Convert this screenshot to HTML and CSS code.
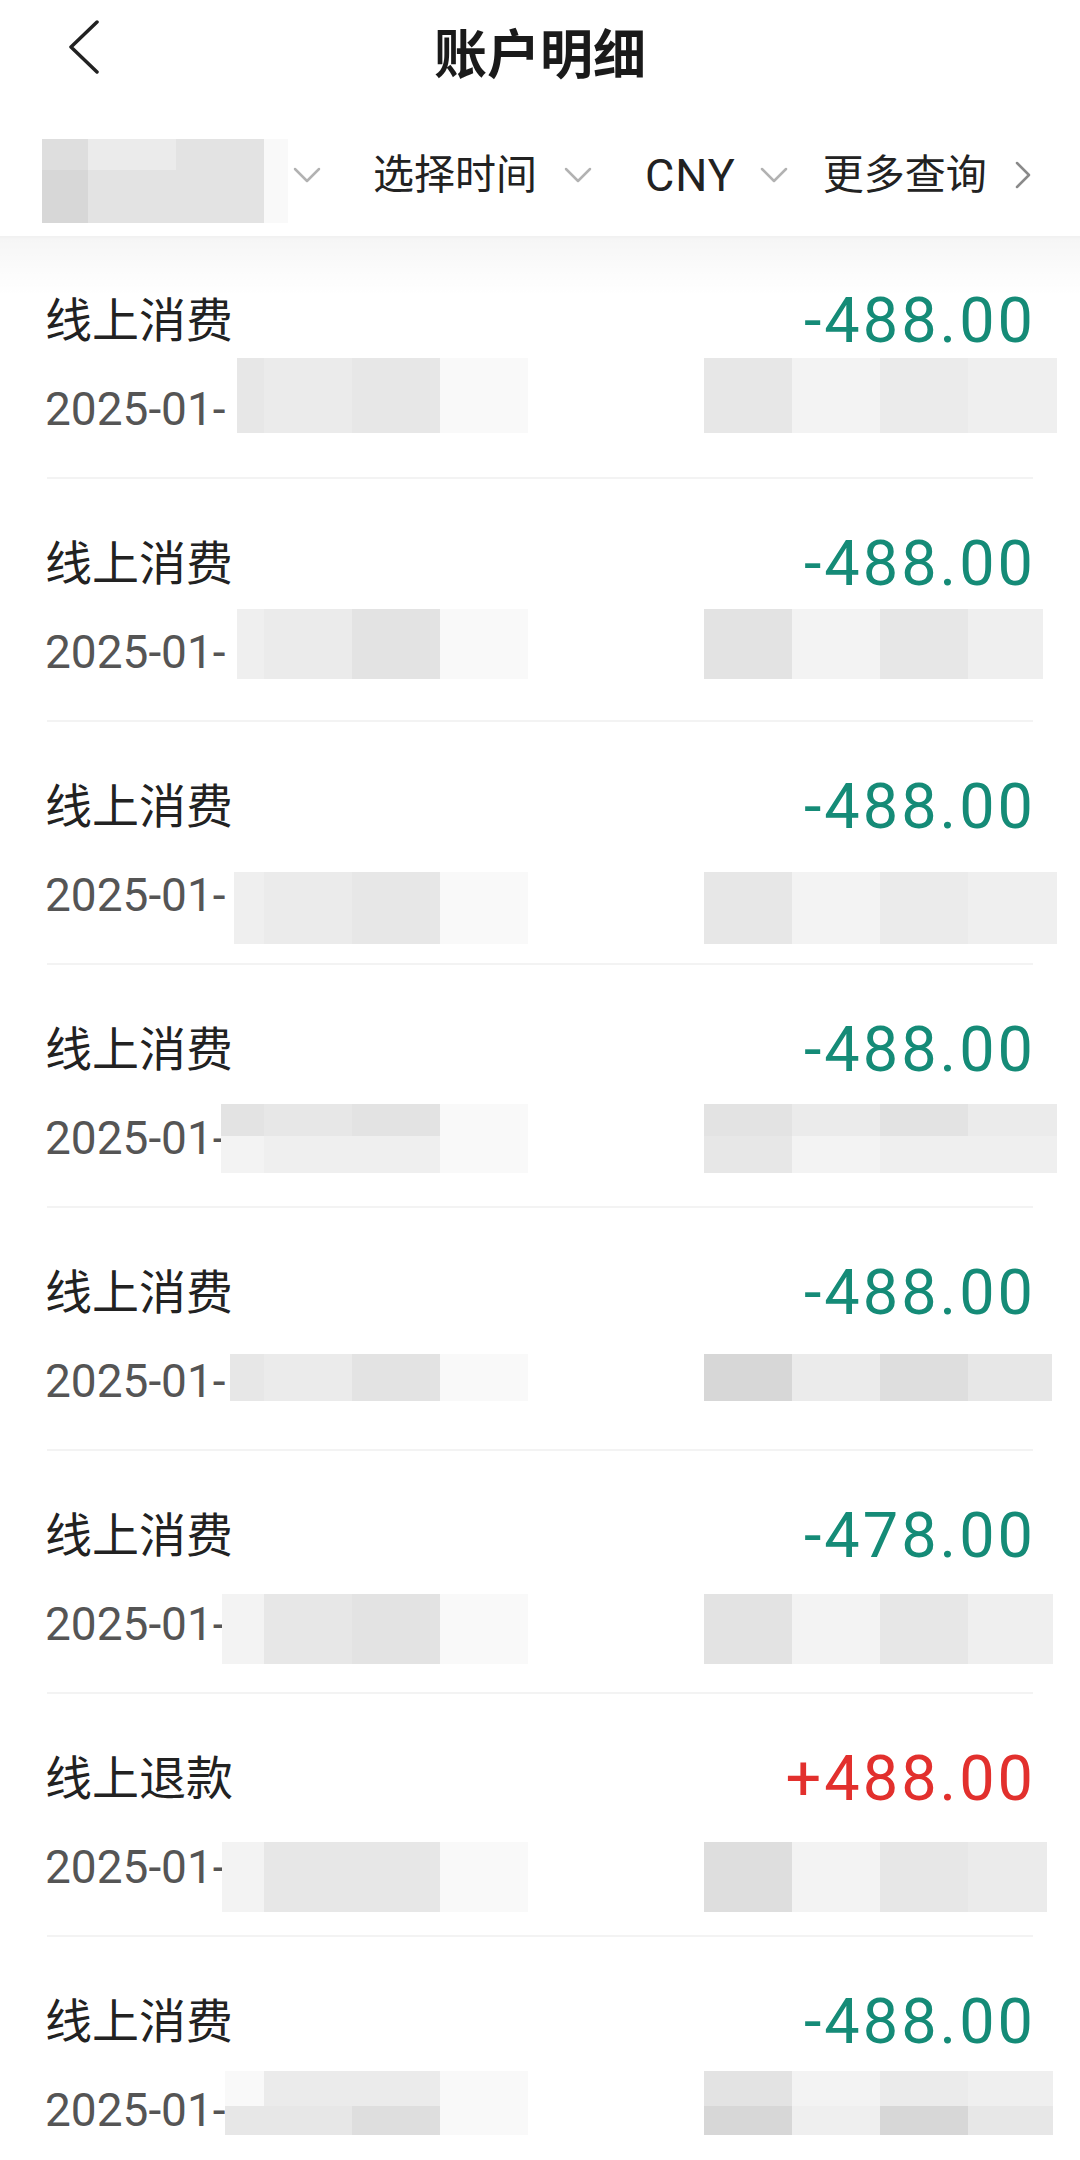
FILE: index.html
```html
<!DOCTYPE html>
<html>
<head>
    <meta charset="utf-8">
    <title>账户明细</title>
    <link rel="stylesheet" href="styles.css">
</head>
<body>
    <div class="header">
        <div class="nav">
            <svg class="back" width="30" height="54" viewBox="0 0 30 54">
                <polyline points="28,2 2,27 28,52" fill="none" stroke="#222" stroke-width="3.5" stroke-linecap="round" stroke-linejoin="round"/>
            </svg>
            <div class="nav-title">账户明细</div>
        </div>

        <div class="filters">
            <div class="filter-item account">
                <div class="acct-mask">
                    <i class="k2"></i><i class="k5"></i><i class="k3"></i><i class="k8"></i>
                    <i class="k1"></i><i class="k3"></i><i class="k3"></i><i class="k8"></i>
                </div>
                <svg class="down" width="28" height="16" viewBox="0 0 28 16">
                    <polyline points="2,2 14,14 26,2" fill="none" stroke="#b2b2b2" stroke-width="2.5" stroke-linecap="round" stroke-linejoin="round"/>
                </svg>
            </div>
            <div class="filter-item time">
                <span>选择时间</span>
                <svg class="down" width="28" height="16" viewBox="0 0 28 16">
                    <polyline points="2,2 14,14 26,2" fill="none" stroke="#b2b2b2" stroke-width="2.5" stroke-linecap="round" stroke-linejoin="round"/>
                </svg>
            </div>
            <div class="filter-item currency">
                <span>CNY</span>
                <svg class="down" width="28" height="16" viewBox="0 0 28 16">
                    <polyline points="2,2 14,14 26,2" fill="none" stroke="#b2b2b2" stroke-width="2.5" stroke-linecap="round" stroke-linejoin="round"/>
                </svg>
            </div>
            <div class="filter-item more">
                <span>更多查询</span>
                <svg width="16" height="28" viewBox="0 0 16 28">
                    <polyline points="2,2 14,14 2,26" fill="none" stroke="#8a8a8a" stroke-width="2.5" stroke-linecap="round" stroke-linejoin="round"/>
                </svg>
            </div>
        </div>
    </div>

    <div class="list">
        <div class="row r1">
            <div class="row-top">
                <span class="row-title">线上消费</span>
                <span class="amount out">-488.00</span>
            </div>
            <div class="row-date">2025-01-</div>
            <div class="mask mask-l"><i class="k4"></i><i class="k5"></i><i class="k4"></i><i class="k8"></i></div>
            <div class="mask mask-r"><i class="k4"></i><i class="k7"></i><i class="k5"></i><i class="k6"></i></div>
        </div>

        <div class="row r2">
            <div class="row-top">
                <span class="row-title">线上消费</span>
                <span class="amount out">-488.00</span>
            </div>
            <div class="row-date">2025-01-</div>
            <div class="mask mask-l"><i class="k6"></i><i class="k5"></i><i class="k3"></i><i class="k8"></i></div>
            <div class="mask mask-r"><i class="k3"></i><i class="k7"></i><i class="k4"></i><i class="k6"></i></div>
        </div>

        <div class="row r3">
            <div class="row-top">
                <span class="row-title">线上消费</span>
                <span class="amount out">-488.00</span>
            </div>
            <div class="row-date">2025-01-</div>
            <div class="mask mask-l"><i class="k6"></i><i class="k5"></i><i class="k4"></i><i class="k8"></i></div>
            <div class="mask mask-r"><i class="k4"></i><i class="k7"></i><i class="k5"></i><i class="k6"></i></div>
        </div>

        <div class="row r4">
            <div class="row-top">
                <span class="row-title">线上消费</span>
                <span class="amount out">-488.00</span>
            </div>
            <div class="row-date">2025-01-</div>
            <div class="mask mask-l">
                <i class="k3"></i><i class="k4"></i><i class="k3"></i><i class="k8"></i>
                <i class="k7"></i><i class="k6"></i><i class="k6"></i><i class="k8"></i>
            </div>
            <div class="mask mask-r">
                <i class="k3"></i><i class="k5"></i><i class="k3"></i><i class="k5"></i>
                <i class="k4"></i><i class="k7"></i><i class="k6"></i><i class="k6"></i>
            </div>
        </div>

        <div class="row r5">
            <div class="row-top">
                <span class="row-title">线上消费</span>
                <span class="amount out">-488.00</span>
            </div>
            <div class="row-date">2025-01-</div>
            <div class="mask mask-l"><i class="k4"></i><i class="k5"></i><i class="k3"></i><i class="k8"></i></div>
            <div class="mask mask-r"><i class="k1"></i><i class="k5"></i><i class="k2"></i><i class="k4"></i></div>
        </div>

        <div class="row r6">
            <div class="row-top">
                <span class="row-title">线上消费</span>
                <span class="amount out">-478.00</span>
            </div>
            <div class="row-date">2025-01-</div>
            <div class="mask mask-l"><i class="k7"></i><i class="k4"></i><i class="k3"></i><i class="k8"></i></div>
            <div class="mask mask-r"><i class="k3"></i><i class="k7"></i><i class="k4"></i><i class="k6"></i></div>
        </div>

        <div class="row r7">
            <div class="row-top">
                <span class="row-title">线上退款</span>
                <span class="amount in">+488.00</span>
            </div>
            <div class="row-date">2025-01-</div>
            <div class="mask mask-l"><i class="k7"></i><i class="k4"></i><i class="k4"></i><i class="k8"></i></div>
            <div class="mask mask-r"><i class="k2"></i><i class="k7"></i><i class="k4"></i><i class="k5"></i></div>
        </div>

        <div class="row r8">
            <div class="row-top">
                <span class="row-title">线上消费</span>
                <span class="amount out">-488.00</span>
            </div>
            <div class="row-date">2025-01-</div>
            <div class="mask mask-l">
                <i class="k8"></i><i class="k5"></i><i class="k5"></i><i class="k8"></i>
                <i class="k4"></i><i class="k4"></i><i class="k2"></i><i class="k8"></i>
            </div>
            <div class="mask mask-r">
                <i class="k3"></i><i class="k7"></i><i class="k5"></i><i class="k6"></i>
                <i class="k1"></i><i class="k6"></i><i class="k1"></i><i class="k4"></i>
            </div>
        </div>
    </div>
</body>
</html>
```

FILE: styles.css
```css
body {
    margin: 0;
    background-color: #fff;
    font-family: Roboto, "Noto Sans CJK SC", sans-serif;
    color: #222;
    overflow: hidden;
}

/* top bar */
.header {
    position: relative;
    z-index: 2;
    background-color: #fff;
}
.header::after {
    content: "";
    position: absolute;
    left: 0;
    right: 0;
    top: 100%;
    height: 60px;
    background: linear-gradient(rgba(0, 0, 0, 0.06), rgba(0, 0, 0, 0.035) 4px, rgba(0, 0, 0, 0));
    pointer-events: none;
}
.nav {
    position: relative;
    display: flex;
    justify-content: center;
    align-items: center;
    height: 102px;
}
.back {
    position: absolute;
    left: 69px;
    top: 20px;
}
.nav-title {
    font-family: "Noto Sans CJK SC", sans-serif;
    font-size: 53px;
    font-weight: 700;
    line-height: 1;
    color: #1a1a1a;
}

.filters {
    display: flex;
    align-items: center;
    box-sizing: border-box;
    height: 134px;
    padding: 12px 0 0 42px;
    font-size: 41px;
    line-height: 1;
    color: #222;
}
.filter-item {
    display: flex;
    align-items: center;
    gap: 27px;
}
.filter-item.account {
    gap: 5px;
}
.filter-item.time {
    margin-left: 52px;
}
.filter-item.currency {
    margin-left: 53px;
    gap: 24px;
    font-size: 45px;
    letter-spacing: 1px;
}
.filter-item.more {
    margin-left: 35px;
    gap: 28px;
}
.acct-mask {
    display: grid;
    grid-template-columns: 46px 88px 88px 24px;
    grid-template-rows: 31px 53px;
    margin-top: 12px;
}

/* list rows */
.row {
    position: relative;
    height: 241px;
    margin: 0 47px;
    border-bottom: 2px solid #f3f3f3;
}
.row-top {
    display: flex;
    justify-content: space-between;
    align-items: flex-start;
    padding-top: 53px;
}
.row-title {
    margin: 4px 0 0 -2px;
    font-family: "Noto Sans CJK SC", sans-serif;
    font-size: 47px;
    line-height: 47px;
    color: #222;
}
.amount {
    font-size: 63px;
    line-height: 63px;
    letter-spacing: 3px;
    margin-right: -3px;
}
.amount.out {
    color: #158b77;
}
.amount.in {
    color: #e2302d;
}
.row-date {
    margin: 34px 0 0 -2px;
    font-size: 46px;
    line-height: 46px;
    color: #555;
}

/* pixelated privacy masks laid over the row */
.mask {
    position: absolute;
    display: grid;
}
.mask-l {
    grid-template-columns: 1fr 88px 88px 88px;
}
.mask-r {
    left: 657px;
    grid-template-columns: 88px 88px 88px 1fr;
}
.mask i,
.acct-mask i {
    display: block;
}

.r1 .mask { top: 122px; height: 75px; }
.r1 .mask-l { left: 190px; width: 291px; }
.r1 .mask-r { width: 353px; }

.r2 .mask { top: 130px; height: 70px; }
.r2 .mask-l { left: 190px; width: 291px; }
.r2 .mask-r { width: 339px; }

.r3 .mask { top: 150px; height: 72px; }
.r3 .mask-l { left: 187px; width: 294px; }
.r3 .mask-r { width: 353px; }

.r4 .mask { top: 139px; height: 69px; grid-template-rows: 32px 1fr; }
.r4 .mask-l { left: 174px; width: 307px; }
.r4 .mask-r { width: 353px; }

.r5 .mask { top: 146px; height: 47px; }
.r5 .mask-l { left: 183px; width: 298px; }
.r5 .mask-r { width: 348px; }

.r6 .mask { top: 143px; height: 70px; }
.r6 .mask-l { left: 175px; width: 306px; }
.r6 .mask-r { width: 349px; }

.r7 .mask { top: 148px; height: 70px; }
.r7 .mask-l { left: 175px; width: 306px; }
.r7 .mask-r { width: 343px; }

.r8 .mask { top: 134px; height: 64px; grid-template-rows: 35px 1fr; }
.r8 .mask-l { left: 178px; width: 303px; }
.r8 .mask-r { width: 349px; }

/* mask shades */
.k1 { background-color: #d7d7d7; }
.k2 { background-color: #dedede; }
.k3 { background-color: #e3e3e3; }
.k4 { background-color: #e7e7e7; }
.k5 { background-color: #ebebeb; }
.k6 { background-color: #efefef; }
.k7 { background-color: #f3f3f3; }
.k8 { background-color: #f9f9f9; }
```
